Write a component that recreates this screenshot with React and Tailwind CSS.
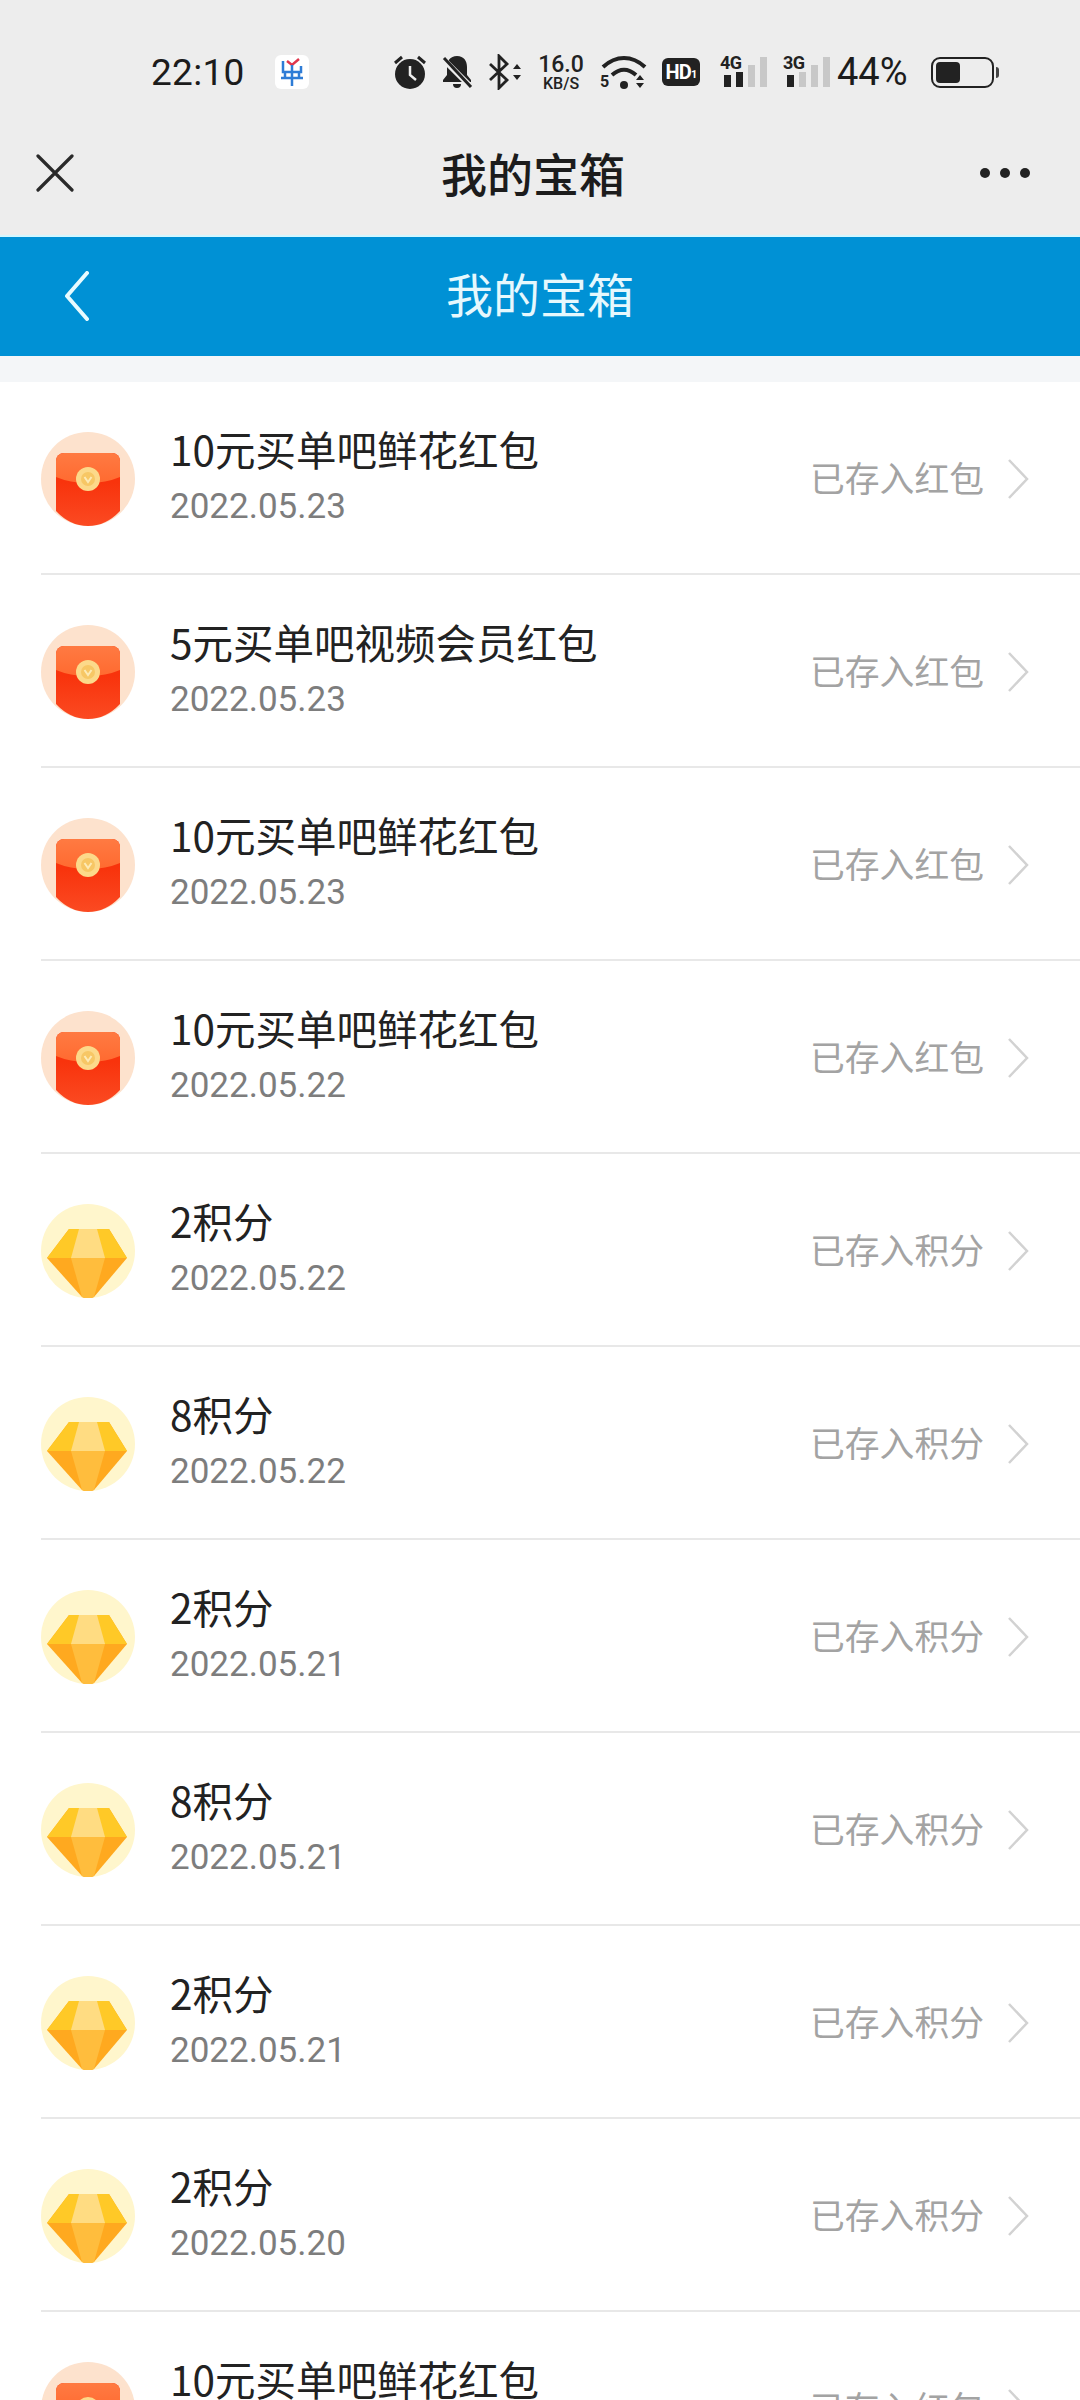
const FONT = { fontFamily: '"Noto Sans CJK SC", sans-serif' };

function Bars({ tag, on }) {
  return (
    <div className="relative h-[30px] w-[46px]">
      <span className="absolute left-0 -top-[4px] font-['Roboto',sans-serif] text-[18px] font-bold leading-[20px] tracking-[-0.6px] text-[#222]">{tag}</span>
      <div className="absolute bottom-0 left-[4px] flex items-end gap-[5px]">
        <div className="h-[12px] w-[7px] bg-[#222]" />
        <div className={on ? 'h-[15px] w-[7px] bg-[#222]' : 'h-[15px] w-[7px] bg-[#c8c8c8]'} />
        <div className="h-[22px] w-[7px] bg-[#c8c8c8]" />
        <div className="h-[30px] w-[7px] bg-[#c8c8c8]" />
      </div>
    </div>
  );
}

function StatusBar() {
  return (
    <div className="flex h-[110px] items-center pl-[151px] pt-[34px]">
      <span className="w-[96px] font-['Roboto',sans-serif] text-[37px] leading-none tracking-[0.3px] text-[#1c1c1c]">22:10</span>
      <div className="ml-[28px] flex h-[34px] w-[34px] items-center justify-center rounded-[6px] bg-white">
        <svg width="24" height="28" viewBox="0 0 24 28">
          <path d="M3 3v11h18V8" fill="none" stroke="#2e7cd6" strokeWidth="2.5" />
          <path d="M7 3l5 4 7-6" fill="none" stroke="#e0364c" strokeWidth="2.5" />
          <path d="M1 20h22M12 7v21M5 15v5M19 15v5" fill="none" stroke="#2e7cd6" strokeWidth="2.5" />
        </svg>
      </div>
      <svg className="ml-[84px]" width="34" height="36" viewBox="0 0 34 36">
        <circle cx="17" cy="20" r="15" fill="#222" />
        <path d="M17 12v9l6 5" fill="none" stroke="#ededed" strokeWidth="2.5" />
        <path d="M2 9l7-6M32 9l-7-6" stroke="#222" strokeWidth="3" />
      </svg>
      <svg className="ml-[13px]" width="34" height="36" viewBox="0 0 34 36">
        <path d="M17 2c-7 0-10 5-10 11v8l-4 5v2h28v-2l-4-5v-8c0-6-3-11-10-11zM13 30h8a4 4 0 0 1-8 0z" fill="#222" />
        <path d="M3 5l28 28" stroke="#ededed" strokeWidth="6" />
        <path d="M4 4l27 29" stroke="#222" strokeWidth="3" />
      </svg>
      <svg className="ml-[14px]" width="36" height="36" viewBox="0 0 36 36">
        <path d="M2 10l17 16-8 8V2l8 8L2 26" fill="none" stroke="#222" strokeWidth="2.8" />
        <path d="M25 15l4-5 4 5zM25 21l4 5 4-5z" fill="#222" />
      </svg>
      <div className="ml-[14px] flex w-[46px] flex-col items-center font-['Roboto',sans-serif] font-medium text-[#222]">
        <span className="text-[23px] leading-[22px]">16.0</span>
        <span className="text-[16px] leading-[15px]">KB/S</span>
      </div>
      <div className="relative ml-[16px] h-[36px] w-[48px]">
        <span className="absolute bottom-0 left-0 font-['Roboto',sans-serif] text-[16px] font-bold leading-[16px] text-[#222]">5</span>
        <svg className="absolute left-0 top-0" width="48" height="36" viewBox="0 0 48 36">
          <path d="M3 13C16 1 32 1 45 13" fill="none" stroke="#222" strokeWidth="4" />
          <path d="M12 21c8-7 16-7 24 0" fill="none" stroke="#222" strokeWidth="4" />
          <circle cx="24" cy="31" r="4" fill="#222" />
          <path d="M36 26l4-5 4 5zM36 29l4 5 4-5z" fill="#222" />
        </svg>
      </div>
      <div className="ml-[14px] flex h-[28px] w-[38px] items-center justify-center rounded-[6px] bg-[#222] font-['Roboto',sans-serif] text-[20px] font-bold leading-none tracking-[-0.8px] text-white">
        HD<span className="mt-[5px] text-[11px]">1</span>
      </div>
      <div className="ml-[20px]"><Bars tag="4G" on /></div>
      <div className="ml-[17px]"><Bars tag="3G" /></div>
      <span className="ml-[8px] w-[74px] font-['Roboto',sans-serif] text-[38px] leading-none text-[#1c1c1c]">44%</span>
      <div className="relative ml-[20px] flex h-[31px] w-[63px] items-center rounded-[9px] border-[2.5px] border-[#222] px-[3px]">
        <div className="h-[21px] w-[24px] rounded-[4px] bg-[#222]" />
        <div className="absolute -right-[7px] top-[8px] h-[11px] w-[3px] rounded-r bg-[#444]" />
      </div>
    </div>
  );
}

function TitleBar() {
  return (
    <div className="flex h-[125px] items-center justify-between pl-[36px] pr-[50px]">
      <svg width="38" height="38" viewBox="0 0 38 38">
        <path d="M2 2l34 34M36 2L2 36" stroke="#2a2a2a" strokeWidth="3.2" strokeLinecap="round" />
      </svg>
      <span className="pb-[2px] pl-[12px] text-[46px] font-medium leading-none text-[#1c1c1c]">我的宝箱</span>
      <div className="flex gap-[10px]">
        <div className="h-[10px] w-[10px] rounded-full bg-[#222]" />
        <div className="h-[10px] w-[10px] rounded-full bg-[#222]" />
        <div className="h-[10px] w-[10px] rounded-full bg-[#222]" />
      </div>
    </div>
  );
}

function Header() {
  return (
    <div className="relative flex h-[119px] shrink-0 items-center justify-center bg-[#0091d5]">
      <svg className="absolute left-[64px] top-[34px]" width="26" height="50" viewBox="0 0 26 50">
        <path d="M23 2L3 25l20 23" fill="none" stroke="#e8fbff" strokeWidth="4" strokeLinecap="round" strokeLinejoin="round" />
      </svg>
      <span className="pb-[9px] text-[47px] leading-none text-[#e6f8fd]">我的宝箱</span>
    </div>
  );
}

function Packet() {
  return (
    <svg width="94" height="94" viewBox="0 0 94 94" className="shrink-0">
      <defs>
        <linearGradient id="rp" x1="0" y1="0" x2="0" y2="1">
          <stop offset="0" stopColor="#ff7a42" />
          <stop offset="1" stopColor="#ff6a30" />
        </linearGradient>
        <linearGradient id="rp2" x1="0" y1="0" x2="0" y2="1">
          <stop offset="0.4" stopColor="#f8330c" />
          <stop offset="1" stopColor="#fb4a22" />
        </linearGradient>
      </defs>
      <circle cx="47" cy="47" r="47" fill="#fde2cd" />
      <path d="M15 29a8 8 0 0 1 8-8h48a8 8 0 0 1 8 8v50Q65 94 47 94T15 79z" fill="url(#rp2)" />
      <path d="M15 29a8 8 0 0 1 8-8h48a8 8 0 0 1 8 8v16q-14 6-32 6t-32-6z" fill="url(#rp)" />
      <circle cx="47" cy="47" r="12" fill="#fcd98a" />
      <circle cx="47" cy="47" r="7" fill="#f7c765" />
      <path d="M43.5 45l3.5 5 3.5-5" fill="none" stroke="#fdeab5" strokeWidth="2" />
    </svg>
  );
}

function Gem() {
  return (
    <svg width="94" height="94" viewBox="0 0 94 94" className="shrink-0">
      <circle cx="47" cy="47" r="47" fill="#fff6cc" />
      <path d="M28 25h40l18 29-33 39q-6 3-12 0L6 54z" fill="#ffa91f" />
      <path d="M28 25h40l18 29H6z" fill="#ffc927" />
      <path d="M38 25h18l8 29H30z" fill="#ffdc82" />
      <path d="M30 54h34L53 93q-6 3-12 0z" fill="#ffbd3d" />
    </svg>
  );
}

const ITEMS = [
  ['10元买单吧鲜花红包', '2022.05.23', 'p'],
  ['5元买单吧视频会员红包', '2022.05.23', 'p'],
  ['10元买单吧鲜花红包', '2022.05.23', 'p'],
  ['10元买单吧鲜花红包', '2022.05.22', 'p'],
  ['2积分', '2022.05.22', 'g'],
  ['8积分', '2022.05.22', 'g'],
  ['2积分', '2022.05.21', 'g'],
  ['8积分', '2022.05.21', 'g'],
  ['2积分', '2022.05.21', 'g'],
  ['2积分', '2022.05.20', 'g'],
  ['10元买单吧鲜花红包', '2022.05.20', 'p'],
];

function Row({ item }) {
  const [title, date, kind] = item;
  return (
    <div className="ml-[41px] flex h-[193px] shrink-0 items-center border-b-2 border-[#e8e8e8] pr-[51px] pt-[2px]">
      {kind === 'p' ? <Packet /> : <Gem />}
      <div className="ml-[35px] flex flex-1 flex-col">
        <span className="text-[40.5px] leading-[56px] text-[#222]">{title}</span>
        <span className="font-['Roboto',sans-serif] text-[35px] leading-[60px] text-[#7d7d7d]">{date}</span>
      </div>
      <span className="pb-[2px] text-[34.8px] leading-none text-[#a3a3a3]">{kind === 'p' ? '已存入红包' : '已存入积分'}</span>
      <svg className="ml-[23px]" width="22" height="42" viewBox="0 0 22 42">
        <path d="M2 2l18 19L2 40" fill="none" stroke="#d2d2d2" strokeWidth="2.5" />
      </svg>
    </div>
  );
}

export default function App() {
  return (
    <div style={FONT} className="flex h-[2400px] w-[1080px] flex-col overflow-hidden bg-white">
      <div className="h-[237px] shrink-0 border-b-2 border-[#d4f7ff] bg-[#ededed]">
        <StatusBar />
        <TitleBar />
      </div>
      <Header />
      <div className="h-[26px] shrink-0 bg-[#f4f6f8]" />
      {ITEMS.map((it, i) => (
        <Row key={i} item={it} />
      ))}
    </div>
  );
}
